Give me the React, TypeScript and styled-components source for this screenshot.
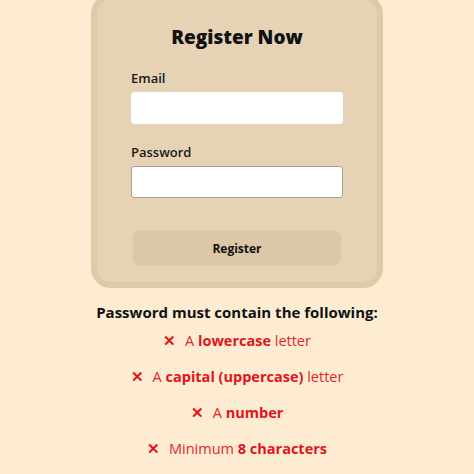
import React, { useState } from 'react'
import styled, { createGlobalStyle } from 'styled-components'

const GlobalStyle = createGlobalStyle`
  html, body {
    margin: 0;
    padding: 0;
    background: #feecd2;
    font-family: 'Open Sans', 'Liberation Sans', sans-serif;
    overflow: hidden;
  }
`

const rules = [
  { pre: 'A ', strong: 'lowercase', post: ' letter' },
  { pre: 'A ', strong: 'capital (uppercase)', post: ' letter' },
  { pre: 'A ', strong: 'number', post: '' },
  { pre: 'Minimum ', strong: '8 characters', post: '' }
]

function App() {
  const [email, setEmail] = useState('')
  const [password, setPassword] = useState('')

  return (
    <Page>
      <GlobalStyle />
      <Card>
        <Title>Register Now</Title>
        <Label htmlFor="email">Email</Label>
        <Input
          id="email"
          type="email"
          value={email}
          onChange={e => setEmail(e.target.value)}
        />
        <Label htmlFor="password" $gap={19}>
          Password
        </Label>
        <Input
          id="password"
          type="password"
          value={password}
          onChange={e => setPassword(e.target.value)}
          $focused
          autoFocus
        />
        <SubmitButton type="button">Register</SubmitButton>
      </Card>
      <Checklist>
        <Heading>Password must contain the following:</Heading>
        {rules.map((r, i) => (
          <Rule key={i} $first={i === 0}>
            <Cross>✕</Cross>
            {r.pre}
            <b>{r.strong}</b>
            {r.post}
          </Rule>
        ))}
      </Checklist>
    </Page>
  )
}

const Page = styled.div`
  display: flex;
  flex-direction: column;
  align-items: center;
  height: 474px;
`
const Card = styled.form`
  display: flex;
  flex-direction: column;
  box-sizing: border-box;
  width: 292px;
  margin-top: -6px;
  padding: 25px 34px 16px;
  background: #e6d3b5;
  border: 6px solid #dccaa8;
  border-radius: 20px;
`
const Title = styled.h1`
  margin: 0;
  font-size: 19px;
  line-height: 24px;
  font-weight: 800;
  text-align: center;
  color: #111;
`
const Label = styled.label<{ $gap?: number }>`
  margin-top: ${p => p.$gap ?? 20}px;
  font-size: 13px;
  line-height: 18px;
  font-weight: 600;
  color: #1a1a1a;
`
const Input = styled.input<{ $focused?: boolean }>`
  margin-top: 5px;
  height: 32px;
  box-sizing: border-box;
  border: 1px solid ${p => (p.$focused ? '#a9a196' : '#fff')};
  border-radius: 3px;
  background: #fff;
  padding: 0 9px;
  font-size: 14px;
  outline: none;
  caret-color: #333;
`
const SubmitButton = styled.button`
  margin: 32px 2px 0;
  height: 36px;
  border: none;
  border-radius: 8px;
  background: #dcc7a9;
  font-family: 'Open Sans', 'Liberation Sans', sans-serif;
  font-size: 12px;
  font-weight: 700;
  color: #111;
`
const Checklist = styled.div`
  display: flex;
  flex-direction: column;
  align-items: center;
  margin-top: 14px;
`
const Heading = styled.div`
  font-size: 15px;
  line-height: 20px;
  font-weight: 700;
  color: #111;
`
const Rule = styled.div<{ $first?: boolean }>`
  margin-top: ${p => (p.$first ? 9 : 16)}px;
  font-size: 14.5px;
  line-height: 20px;
  color: #e3262c;
  b {
    font-weight: 700;
    color: #e0141c;
  }
`
const Cross = styled.span`
  font-weight: 700;
  margin-right: 9px;
  color: #e0141c;
`

export default App
